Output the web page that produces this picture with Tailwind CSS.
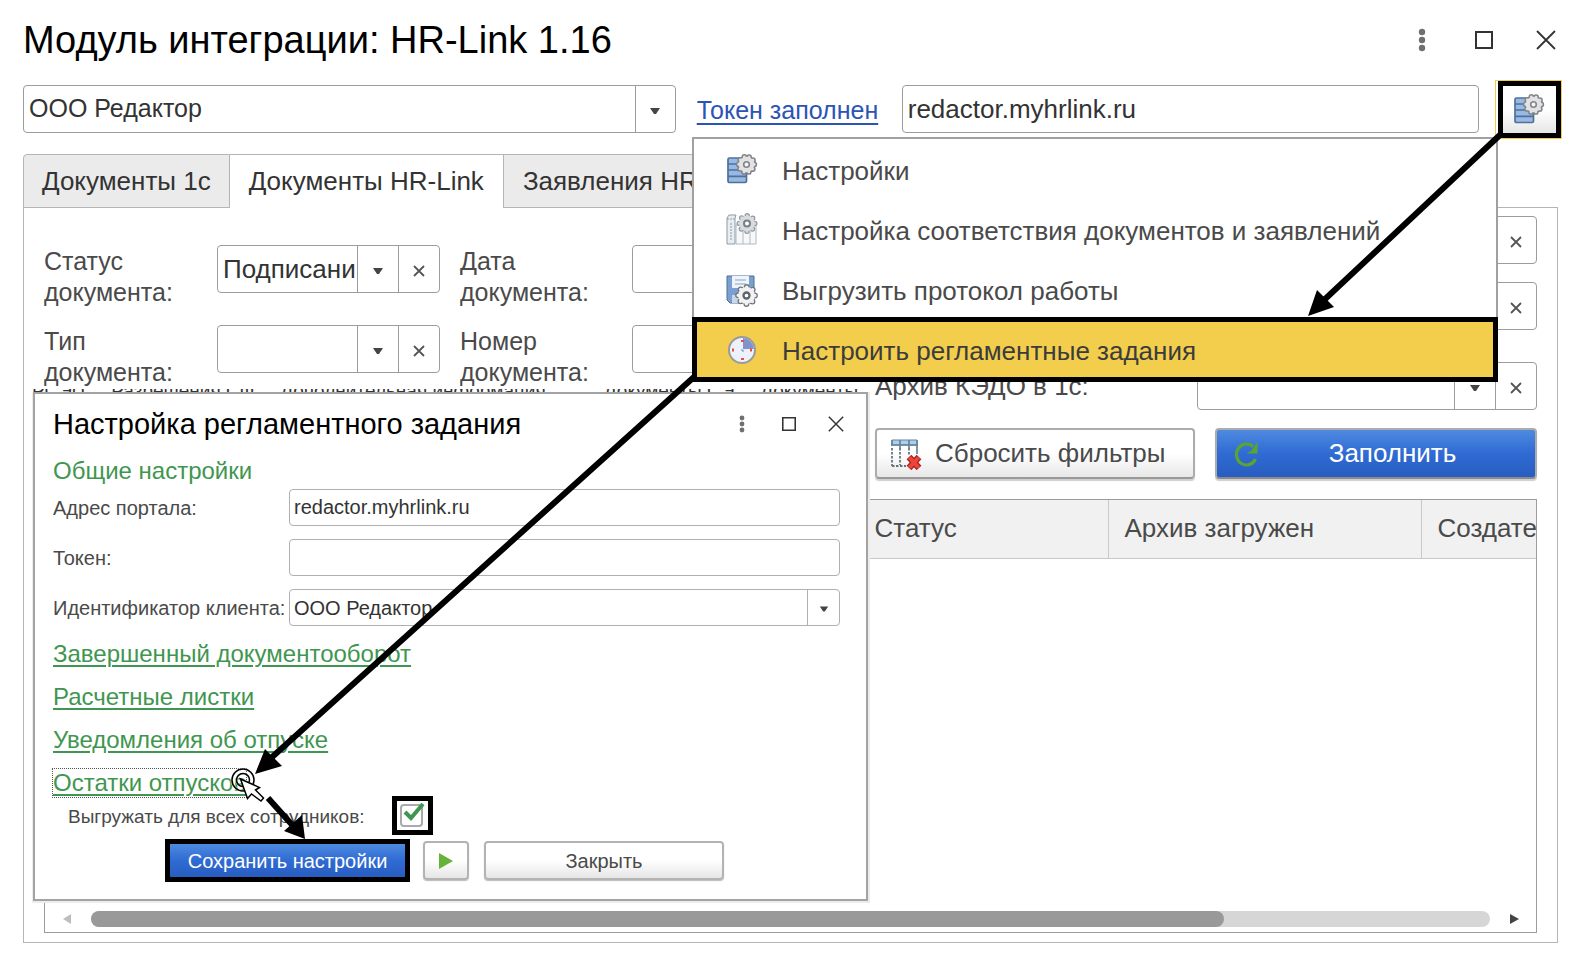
<!DOCTYPE html>
<html lang="ru">
<head>
<meta charset="utf-8">
<title>Модуль интеграции: HR-Link 1.16</title>
<script src="https://cdn.jsdelivr.net/npm/@tailwindcss/browser@4"></script>
</head>
<body class="bg-white font-['Liberation_Sans',Arial,sans-serif] text-[#4a4a4a]">
<svg class="hidden" aria-hidden="true">
  <defs>
    <symbol id="stack-gear" viewBox="0 0 32 32">
      <rect x="2" y="5" width="18.500" height="24.500" rx="1.500" fill="#98b9e6" stroke="#4f7196" stroke-width="1.700"/>
      <path d="M2 11h18M2 17h18M2 23.300h18" stroke="#4f7196" stroke-width="1.700"/>
      <circle cx="20.500" cy="11.500" r="7.800" fill="none" stroke="#80848b" stroke-width="5.800" stroke-linecap="round" stroke-dasharray="0 4.900"/>
      <circle cx="20.500" cy="11.500" r="7.800" fill="#e2e2e2" stroke="#e2e2e2" stroke-width="2.800" stroke-linecap="round" stroke-dasharray="0 4.900"/>
      <circle cx="20.500" cy="11.500" r="2.800" fill="#f4f4f4" stroke="#80848b" stroke-width="1.600"/>
    </symbol>
    <symbol id="binders-gear" viewBox="0 0 32 32">
      <path d="M1 5l2-3h7l-1 3v26H1z" fill="#e9edf0" stroke="#8d9ba7"/>
      <path d="M1 6h9M5 10v18" stroke="#8d9ba7" stroke-dasharray="2 1"/>
      <path d="M10 12h20v19H10zM17 12v19M24 12v19" fill="#f7f8f9" stroke="#b1bac2"/>
      <circle cx="21" cy="10.500" r="7.800" fill="none" stroke="#93999f" stroke-width="5.400" stroke-linecap="round" stroke-dasharray="0 6.126"/>
      <circle cx="21" cy="10.500" r="7.800" fill="#d8dcdf" stroke="#d8dcdf" stroke-width="3" stroke-linecap="round" stroke-dasharray="0 6.126"/>
      <circle cx="21" cy="10.500" r="3" fill="#fff" stroke="#777f87" stroke-width="2"/>
    </symbol>
    <symbol id="disk-gear" viewBox="0 0 32 32">
      <path d="M1 1h27v27H4l-3-3z" fill="#7ba0cf" stroke="#4b6e99"/>
      <path d="M6 1h17v12H6z" fill="#eff4fa"/><path d="M9 5h11M9 9h11" stroke="#a9bfda" stroke-width="1.500"/>
      <path d="M6 20h9v8H6z" fill="#c9d8e9"/>
      <circle cx="20.500" cy="20.500" r="8.400" fill="none" stroke="#72777d" stroke-width="6" stroke-linecap="round" stroke-dasharray="0 6.597"/>
      <circle cx="20.500" cy="20.500" r="8.400" fill="#f2f2f2" stroke="#f2f2f2" stroke-width="3.400" stroke-linecap="round" stroke-dasharray="0 6.597"/>
      <circle cx="20.500" cy="20.500" r="3" fill="#fff" stroke="#5f646a" stroke-width="2.300"/>
    </symbol>
    <symbol id="clock" viewBox="0 0 32 32">
      <circle cx="16" cy="16" r="13" fill="#edf1fc" stroke="#999b9c" stroke-width="2"/>
      <path d="M17 15V4a12 12 0 0 1 11 11z" fill="#7f94cc"/>
      <path d="M16 15v2h2" stroke="#7288c4" fill="none"/>
      <path d="M15 7h3M15 25h3M7 14.500v3M25 14.500v3" stroke="#e8503f" stroke-width="2"/>
    </symbol>
    <symbol id="table-clear" viewBox="0 0 32 32">
      <path d="M2 2h25v5H2z" fill="#a9d0ef" stroke="#68839a"/>
      <path d="M1 7h27M10 2v8M19 2v8M2 2v6M27 2v14" stroke="#68839a" stroke-width="1.700" fill="none"/>
      <path d="M2 10v18M10 10v17M19 10v8M2 28h14" stroke="#66737f" stroke-width="1.800" stroke-dasharray="2.500 1.500" fill="none"/>
      <path d="M19 19l10 11M29 19L19 30" stroke="#a32525" stroke-width="6.500"/>
      <path d="M19.500 19.500l9 10M28.500 19.500l-9 10" stroke="#ef4437" stroke-width="4"/>
    </symbol>
    <symbol id="caret" viewBox="0 0 12 8"><path d="M1 1h10L7 7H5z" fill="#444"/></symbol>
    <symbol id="cross" viewBox="0 0 12 12"><path d="M1 1l10 10M11 1L1 11" stroke="#555" stroke-width="1.800"/></symbol>
    <symbol id="dots" viewBox="0 0 8 24"><g fill="#707070"><circle cx="4" cy="4" r="3.200"/><circle cx="4" cy="12" r="3.200"/><circle cx="4" cy="20" r="3.200"/></g></symbol>
    <symbol id="maximize" viewBox="0 0 18 18"><path d="M1 1h16v16H1z" fill="none" stroke="#333" stroke-width="2"/></symbol>
    <symbol id="close" viewBox="0 0 20 20"><path d="M1 1l18 18M19 1L1 19" stroke="#333" stroke-width="1.800"/></symbol>
  </defs>
</svg>

<div class="relative flex min-h-screen flex-col overflow-hidden pb-[25px] pl-[23px] pr-[26px]">
  <header class="flex h-[85px] items-center justify-between pb-[5px]">
    <h1 class="text-[38px] leading-none text-black">Модуль интеграции: HR-Link 1.16</h1>
    <div class="flex items-center gap-[42px] pr-0.5">
      <button aria-label="Меню" class="flex w-5 justify-center"><svg class="h-6 w-2"><use href="#dots"/></svg></button>
      <button aria-label="Развернуть" class="flex w-5 justify-center"><svg class="size-[18px]"><use href="#maximize"/></svg></button>
      <button aria-label="Закрыть окно"><svg class="size-5"><use href="#close"/></svg></button>
    </div>
  </header>

  <div class="flex h-12 items-center text-[26px]">
    <div class="flex h-12 flex-[655] rounded-sm border border-[#9c9c9c]">
      <select aria-label="Организация" class="min-w-0 flex-1 appearance-none pl-[5px] text-[25px] text-[#333] outline-none"><option>ООО Редактор</option></select>
      <span class="flex w-10 items-center justify-center border-l border-[#9c9c9c] pt-1"><svg class="h-2 w-3"><use href="#caret"/></svg></span>
    </div>
    <a href="#" class="ml-[21px] mr-5 w-[185px] whitespace-nowrap pt-1 text-[25px] text-[#2b54b5] underline decoration-2 underline-offset-4">Токен заполнен</a>
    <input aria-label="Адрес портала" value="redactor.myhrlink.ru" class="h-12 min-w-0 flex-[574] rounded-sm border border-[#9c9c9c] pl-[5px] text-[#333] outline-none">
    <div class="-mr-1 ml-4 border border-[#f2cd4b] pl-0.5">
      <button aria-label="Настройки модуля" class="flex h-[57px] w-[63px] items-center justify-center border-[5px] border-black bg-linear-to-b from-white from-50% to-[#e6e6e6] pr-0.5"><svg class="size-8"><use href="#stack-gear"/></svg></button>
    </div>
  </div>

  <nav class="mt-[21px] flex h-[54px] text-[26px] text-[#333]">
    <button class="relative z-10 flex h-[54px] items-center rounded-tl-sm border border-[#b5b5b5] bg-[#ebebeb] px-[18px]">Документы 1с</button>
    <button class="relative z-10 flex h-[54px] items-center border-t border-[#b5b5b5] bg-white px-[19px]">Документы HR-Link</button>
    <button class="relative z-10 flex h-[54px] items-center border border-[#b5b5b5] bg-[#ebebeb] px-[19px]">Заявления HR-Link</button>
  </nav>

  <main class="-mt-px flex flex-1 flex-col border border-[#b5b5b5] pb-[9px] pl-5 pr-5 text-[26px]">
    <div class="flex">
      <div class="grid flex-1 auto-rows-[62px] grid-cols-[173px_223px_172px_1fr] content-start gap-y-[18px] pr-5 pt-[37px] leading-[31px]">
        <label for="status" class="pt-px text-[25px]">Статус документа:</label>
        <div class="flex h-12 rounded-sm border border-[#9c9c9c]">
          <select id="status" class="min-w-0 flex-1 appearance-none pl-[5px] text-[#333] outline-none"><option>Подписани</option></select>
          <span class="flex w-[41px] items-center justify-center border-l border-[#9c9c9c] pt-1"><svg class="h-2 w-3"><use href="#caret"/></svg></span>
          <button aria-label="Очистить статус" class="flex w-[41px] items-center justify-center border-l border-[#9c9c9c] pt-1"><svg class="size-3"><use href="#cross"/></svg></button>
        </div>
        <label for="date" class="pl-5 pt-px text-[25px]">Дата документа:</label>
        <input id="date" class="ml-5 h-12 min-w-0 rounded-sm border border-[#9c9c9c]">
        <label for="type" class="pt-px text-[25px]">Тип документа:</label>
        <div class="flex h-12 rounded-sm border border-[#9c9c9c]">
          <select id="type" class="min-w-0 flex-1 appearance-none"><option></option></select>
          <span class="flex w-[41px] items-center justify-center border-l border-[#9c9c9c] pt-1"><svg class="h-2 w-3"><use href="#caret"/></svg></span>
          <button aria-label="Очистить тип" class="flex w-[41px] items-center justify-center border-l border-[#9c9c9c] pt-1"><svg class="size-3"><use href="#cross"/></svg></button>
        </div>
        <label for="number" class="pl-5 pt-px text-[25px]">Номер документа:</label>
        <input id="number" class="ml-5 h-12 min-w-0 rounded-sm border border-[#9c9c9c]">
      </div>

      <div class="flex w-[662px] flex-col pt-2">
        <div class="mb-[18px] ml-[322px] flex h-12 justify-end rounded-sm border border-[#9c9c9c]">
          <button aria-label="Очистить" class="flex w-[41px] items-center justify-center pt-1"><svg class="size-3"><use href="#cross"/></svg></button>
        </div>
        <div class="mb-8 ml-[322px] flex h-12 justify-end rounded-sm border border-[#9c9c9c]">
          <button aria-label="Очистить" class="flex w-[41px] items-center justify-center pt-1"><svg class="size-3"><use href="#cross"/></svg></button>
        </div>
        <div class="mb-[18px] flex h-12 items-center">
          <label for="archive" class="w-[322px]">Архив КЭДО в 1с:</label>
          <div class="flex h-12 flex-1 rounded-sm border border-[#9c9c9c]">
            <select id="archive" class="min-w-0 flex-1 appearance-none"><option></option></select>
            <span class="flex w-[41px] items-center justify-center border-l border-[#9c9c9c] pt-1"><svg class="h-2 w-3"><use href="#caret"/></svg></span>
            <button aria-label="Очистить архив" class="flex w-[41px] items-center justify-center border-l border-[#9c9c9c] pt-1"><svg class="size-3"><use href="#cross"/></svg></button>
          </div>
        </div>
        <div class="flex h-[51px] gap-5">
          <button class="flex flex-1 items-center gap-[13px] whitespace-nowrap rounded border-2 border-[#acacac] border-b-[#999] bg-linear-to-b from-white from-50% to-[#e8e8e8] pl-[13px] shadow-[0_2px_1px_#cfcfcf]"><svg class="size-8"><use href="#table-clear"/></svg>Сбросить фильтры</button>
          <button class="flex flex-1 items-center rounded border-2 border-[#acacac] border-b-[#8c8c8c] bg-linear-to-b from-[#4f8ae0] via-[#2f6bd3] to-[#285dc0] pl-[15px] text-white shadow-[0_2px_1px_#cfcfcf]">
            <svg class="size-7" viewBox="0 0 28 28"><path d="M21 6.500A10 10.500 0 1 0 23.500 19" fill="none" stroke="#5aa532" stroke-width="3.200"/><path d="M25.500 2v11.500H14.500l5-3z" fill="#5aa532"/></svg>
            <span class="flex-1 pr-2.5 text-center">Заполнить</span>
          </button>
        </div>
      </div>
    </div>

    <section class="mt-5 flex flex-1 flex-col overflow-hidden border border-[#9c9c9c]">
      <div class="min-h-0 flex-1 overflow-hidden">
        <table class="w-[1640px] table-fixed border-collapse">
          <colgroup><col class="w-[813px]"><col class="w-[250px]"><col class="w-[313px]"><col></colgroup>
          <thead><tr class="h-[58px] border-b border-[#c9c9c9] bg-[#f1f1f1] text-left">
            <td class="border-r border-[#c9c9c9]"></td>
            <th class="border-r border-[#c9c9c9] px-4 font-normal">Статус</th>
            <th class="border-r border-[#c9c9c9] px-4 font-normal">Архив загружен</th>
            <th class="px-4 font-normal">Создатель</th>
          </tr></thead>
        </table>
      </div>
      <div class="flex h-[27px] items-center pl-[18px] pr-[17px]" role="scrollbar" aria-label="Прокрутка таблицы" aria-valuenow="0" aria-orientation="horizontal">
        <svg class="h-[10px] w-2" viewBox="0 0 8 10"><path d="M8 0v10L0 5z" fill="#bdbdbd"/></svg>
        <div class="ml-5 mr-5 h-4 flex-1 rounded-full bg-[#d6d6d6]"><div class="h-4 w-[81%] rounded-full bg-[#999]"></div></div>
        <svg class="h-[10px] w-[9px]" viewBox="0 0 9 10"><path d="M0 0v10l9-5z" fill="#444"/></svg>
      </div>
    </section>
  </main>

  <!-- Settings menu -->
  <div role="menu" class="absolute left-[692px] top-[137px] z-20 w-[806px] border-2 border-b-0 border-[#a0a0a0] bg-white pt-0.5 text-[26px]">
    <button role="menuitem" class="flex h-[60px] w-full items-center gap-6 pl-8"><svg class="mb-1 size-8"><use href="#stack-gear"/></svg>Настройки</button>
    <button role="menuitem" class="flex h-[60px] w-full items-center gap-6 pl-8"><svg class="mb-1 size-8"><use href="#binders-gear"/></svg>Настройка соответствия документов и заявлений</button>
    <button role="menuitem" class="flex h-14 w-full items-center gap-6 pl-8 pt-1"><svg class="size-8"><use href="#disk-gear"/></svg>Выгрузить протокол работы</button>
    <div class="-mx-0.5 border-[5px] border-black bg-[#f3ce4c]">
      <button role="menuitem" class="flex h-[55px] w-full items-center gap-6 pl-[29px] pt-[3px] text-[#3c3c3c]"><svg class="mb-0.5 size-8"><use href="#clock"/></svg>Настроить регламентные задания</button>
    </div>
  </div>

  <!-- Scheduled job dialog over the edge of a document list -->
  <div class="absolute left-8 top-[389px] z-20 w-[838px] bg-[#ececec]">
    <div class="h-[3px] overflow-hidden bg-white" aria-hidden="true">
      <div class="flex h-[3px] items-center gap-[26px] overflow-hidden whitespace-nowrap text-[19px] leading-none text-[#333]"><span>РСЭП</span><span>Разрешения СФ</span><span>Дополнительная информация</span><span class="ml-8">Документы СЭ</span><span>Документы</span></div>
    </div>
    <div role="dialog" aria-label="Настройка регламентного задания" class="mb-0.5 ml-px mr-[2px] h-[509px] border-2 border-[#a3a3a3] bg-white pl-[18px] pr-[26px] text-[20px]">
      <div class="flex h-[60px] items-center justify-between">
        <h2 class="text-[29px] leading-none text-black">Настройка регламентного задания</h2>
        <div class="-mr-1 flex items-center gap-[31px]">
          <button aria-label="Меню диалога" class="flex w-4 justify-center"><svg class="h-[18px] w-1.5"><use href="#dots"/></svg></button>
          <button aria-label="Развернуть диалог" class="flex w-4 justify-center"><svg class="size-[14px]"><use href="#maximize"/></svg></button>
          <button aria-label="Закрыть диалог"><svg class="size-4"><use href="#close"/></svg></button>
        </div>
      </div>
      <h3 class="h-[34px] text-[24px] leading-[33px] text-[#3f9650]">Общие настройки</h3>
      <div class="grid grid-cols-[236px_1fr] items-center gap-y-[13px] whitespace-nowrap pt-px">
        <label for="portal">Адрес портала:</label>
        <input id="portal" value="redactor.myhrlink.ru" class="h-[37px] min-w-0 rounded-sm border border-[#b0b0b0] pl-1 text-[#333] outline-none">
        <label for="token">Токен:</label>
        <input id="token" class="h-[37px] min-w-0 rounded-sm border border-[#b0b0b0] outline-none">
        <label for="client">Идентификатор клиента:</label>
        <div class="flex h-[37px] rounded-sm border border-[#b0b0b0]">
          <select id="client" class="min-w-0 flex-1 appearance-none pl-1 text-[#333] outline-none"><option>ООО Редактор</option></select>
          <span class="flex w-8 items-center justify-center border-l border-[#b0b0b0] pt-0.5"><svg class="h-2 w-2.5"><use href="#caret"/></svg></span>
        </div>
      </div>
      <div class="mt-3.5 flex flex-col items-start gap-[15px] text-[24px] leading-7 text-[#3f9650]">
        <a href="#" class="underline decoration-2 underline-offset-3">Завершенный документооборот</a>
        <a href="#" class="underline decoration-2 underline-offset-3">Расчетные листки</a>
        <a href="#" class="underline decoration-2 underline-offset-3">Уведомления об отпуске</a>
        <a href="#" class="underline decoration-2 underline-offset-3 outline outline-dotted outline-[#555]">Остатки отпусков</a>
      </div>
      <div class="flex h-9 items-center gap-[27px] pl-[15px]">
        <label for="all" class="pt-1 text-[19px]">Выгружать для всех сотрудников:</label>
        <span class="relative flex h-[39px] w-[41px] items-center border-[5px] border-black bg-white pl-[3px]">
          <input id="all" type="checkbox" checked class="size-[23px] appearance-none rounded-sm border-2 border-[#aaa]">
          <svg class="pointer-events-none absolute left-1.5 top-0.5 h-5 w-[22px]" viewBox="0 0 22 20"><path d="M2 9l6 6L20 1" fill="none" stroke="#3f9650" stroke-width="4"/></svg>
        </span>
      </div>
      <div class="mt-1.5 flex items-center pl-28">
        <button class="h-[43px] w-[245px] border-[5px] border-black bg-linear-to-b from-[#4f8ae0] via-[#2f6bd3] to-[#285dc0] text-white">Сохранить настройки</button>
        <button aria-label="Запустить" class="ml-[13px] flex h-[39px] w-[46px] items-center justify-center rounded border-2 border-[#b3b3b3] bg-linear-to-b from-white from-50% to-[#e6e6e6] shadow-[0_1px_1px_#bbb]"><svg class="h-4 w-[14px]" viewBox="0 0 14 16"><path d="M0 0v16l14-8z" fill="#65b437"/></svg></button>
        <button class="ml-[15px] h-[39px] w-60 rounded border-2 border-[#b3b3b3] bg-linear-to-b from-white from-50% to-[#e6e6e6] shadow-[0_1px_1px_#bbb]">Закрыть</button>
      </div>
    </div>
  </div>

  <!-- Annotation arrows and click pointer -->
  <svg class="pointer-events-none absolute left-0 top-0 z-30 h-[968px] w-[1584px]" viewBox="0 0 1584 968" aria-hidden="true">
    <g stroke="#000" stroke-width="6"><path d="M1501 134L1323 301M694 377L271 758M268 798L294 827"/></g>
    <path d="M1308 316l9-26 17 17zM255 774l10-25 17 17zM305 839l-21-8 18-16z"/>
    <g fill="none" stroke="#fff" stroke-opacity="0.500" stroke-width="3"><circle cx="243" cy="780" r="11"/><circle cx="243" cy="780" r="6.500"/></g>
    <g fill="none" stroke="#000" stroke-width="1.500"><circle cx="243" cy="780" r="11"/><circle cx="243" cy="780" r="6.500"/></g>
    <path d="M240.500 779l7 19.500 4-4.500 9.500 7 2.500-3-8-8 4-2.500z" fill="#fff" stroke="#000" stroke-width="1.500"/>
  </svg>
</div>
</body>
</html>
